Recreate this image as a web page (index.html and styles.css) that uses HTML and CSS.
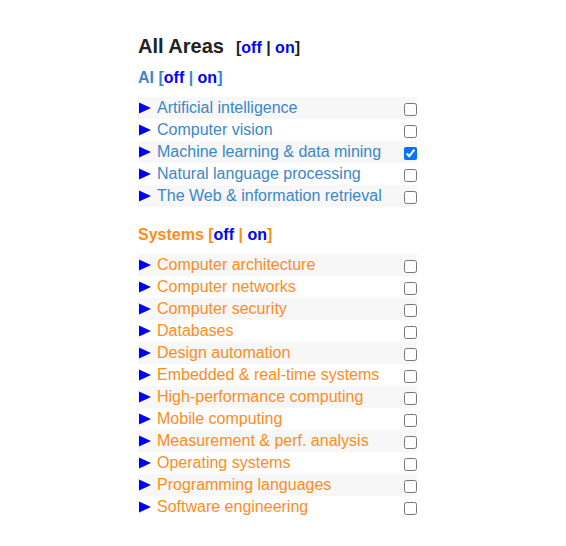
FILE: index.html
```html
<!DOCTYPE html>
<html lang="en">
<head>
<meta charset="utf-8">
<title>Areas</title>
<link rel="stylesheet" href="styles.css">
</head>
<body>
<div class="panel">
  <div class="all-head">
    <span class="title">All Areas</span>
    <span class="toggle">[<a class="lnk" href="#">off</a> | <a class="lnk" href="#">on</a>]</span>
  </div>

  <section class="group ai">
    <div class="group-head">AI [<a class="lnk" href="#">off</a> | <a class="lnk" href="#">on</a>]</div>
    <ul class="rows">
      <li class="row"><span class="label"><svg class="tri" width="12" height="12" viewBox="0 0 12 12"><polygon points="0,0.5 12,6 0,11.5"/></svg>Artificial intelligence</span><input type="checkbox" class="cb"></li>
      <li class="row"><span class="label"><svg class="tri" width="12" height="12" viewBox="0 0 12 12"><polygon points="0,0.5 12,6 0,11.5"/></svg>Computer vision</span><input type="checkbox" class="cb"></li>
      <li class="row"><span class="label"><svg class="tri" width="12" height="12" viewBox="0 0 12 12"><polygon points="0,0.5 12,6 0,11.5"/></svg>Machine learning &amp; data mining</span><input type="checkbox" class="cb" checked></li>
      <li class="row"><span class="label"><svg class="tri" width="12" height="12" viewBox="0 0 12 12"><polygon points="0,0.5 12,6 0,11.5"/></svg>Natural language processing</span><input type="checkbox" class="cb"></li>
      <li class="row"><span class="label"><svg class="tri" width="12" height="12" viewBox="0 0 12 12"><polygon points="0,0.5 12,6 0,11.5"/></svg>The Web &amp; information retrieval</span><input type="checkbox" class="cb"></li>
    </ul>
  </section>

  <section class="group sys">
    <div class="group-head">Systems [<a class="lnk" href="#">off</a> | <a class="lnk" href="#">on</a>]</div>
    <ul class="rows">
      <li class="row"><span class="label"><svg class="tri" width="12" height="12" viewBox="0 0 12 12"><polygon points="0,0.5 12,6 0,11.5"/></svg>Computer architecture</span><input type="checkbox" class="cb"></li>
      <li class="row"><span class="label"><svg class="tri" width="12" height="12" viewBox="0 0 12 12"><polygon points="0,0.5 12,6 0,11.5"/></svg>Computer networks</span><input type="checkbox" class="cb"></li>
      <li class="row"><span class="label"><svg class="tri" width="12" height="12" viewBox="0 0 12 12"><polygon points="0,0.5 12,6 0,11.5"/></svg>Computer security</span><input type="checkbox" class="cb"></li>
      <li class="row"><span class="label"><svg class="tri" width="12" height="12" viewBox="0 0 12 12"><polygon points="0,0.5 12,6 0,11.5"/></svg>Databases</span><input type="checkbox" class="cb"></li>
      <li class="row"><span class="label"><svg class="tri" width="12" height="12" viewBox="0 0 12 12"><polygon points="0,0.5 12,6 0,11.5"/></svg>Design automation</span><input type="checkbox" class="cb"></li>
      <li class="row"><span class="label"><svg class="tri" width="12" height="12" viewBox="0 0 12 12"><polygon points="0,0.5 12,6 0,11.5"/></svg>Embedded &amp; real-time systems</span><input type="checkbox" class="cb"></li>
      <li class="row"><span class="label"><svg class="tri" width="12" height="12" viewBox="0 0 12 12"><polygon points="0,0.5 12,6 0,11.5"/></svg>High-performance computing</span><input type="checkbox" class="cb"></li>
      <li class="row"><span class="label"><svg class="tri" width="12" height="12" viewBox="0 0 12 12"><polygon points="0,0.5 12,6 0,11.5"/></svg>Mobile computing</span><input type="checkbox" class="cb"></li>
      <li class="row"><span class="label"><svg class="tri" width="12" height="12" viewBox="0 0 12 12"><polygon points="0,0.5 12,6 0,11.5"/></svg>Measurement &amp; perf. analysis</span><input type="checkbox" class="cb"></li>
      <li class="row"><span class="label"><svg class="tri" width="12" height="12" viewBox="0 0 12 12"><polygon points="0,0.5 12,6 0,11.5"/></svg>Operating systems</span><input type="checkbox" class="cb"></li>
      <li class="row"><span class="label"><svg class="tri" width="12" height="12" viewBox="0 0 12 12"><polygon points="0,0.5 12,6 0,11.5"/></svg>Programming languages</span><input type="checkbox" class="cb"></li>
      <li class="row"><span class="label"><svg class="tri" width="12" height="12" viewBox="0 0 12 12"><polygon points="0,0.5 12,6 0,11.5"/></svg>Software engineering</span><input type="checkbox" class="cb"></li>
    </ul>
  </section>
</div>
</body>
</html>
```

FILE: styles.css
```css
html, body {
  margin: 0;
  padding: 0;
  background: #ffffff;
}

body {
  font-family: "Liberation Sans", Arial, sans-serif;
}

.panel {
  width: 279px;
  margin-left: 138px;
  padding-top: 34px;
}

.all-head {
  display: flex;
  align-items: baseline;
  gap: 12px;
  height: 24px;
  line-height: 24px;
  color: #222222;
}

.title {
  font-size: 20px;
  font-weight: bold;
}

.toggle {
  font-size: 16px;
  font-weight: bold;
  color: #222222;
}

.lnk {
  color: #0000ff;
  text-decoration: none;
}

.group {
  margin-top: 10px;
}

.group.sys {
  margin-top: 18px;
}

.ai {
  color: #3a87c8;
}

.sys {
  color: #ff8c1a;
}

.group-head {
  font-size: 16px;
  font-weight: bold;
  line-height: 20px;
  margin-bottom: 9px;
}

.rows {
  list-style: none;
  margin: 0;
  padding: 0;
}

.row {
  display: flex;
  align-items: center;
  justify-content: space-between;
  height: 22px;
  font-size: 16px;
  line-height: 22px;
}

.row:nth-child(odd) {
  background: #f7f7f7;
}

.label {
  display: flex;
  align-items: center;
  gap: 6px;
  white-space: nowrap;
}

.tri {
  fill: #0000ff;
  flex: none;
  margin-left: 1px;
}

.cb {
  width: 13px;
  height: 13px;
  margin: 3px 0 0 0;
}
```
